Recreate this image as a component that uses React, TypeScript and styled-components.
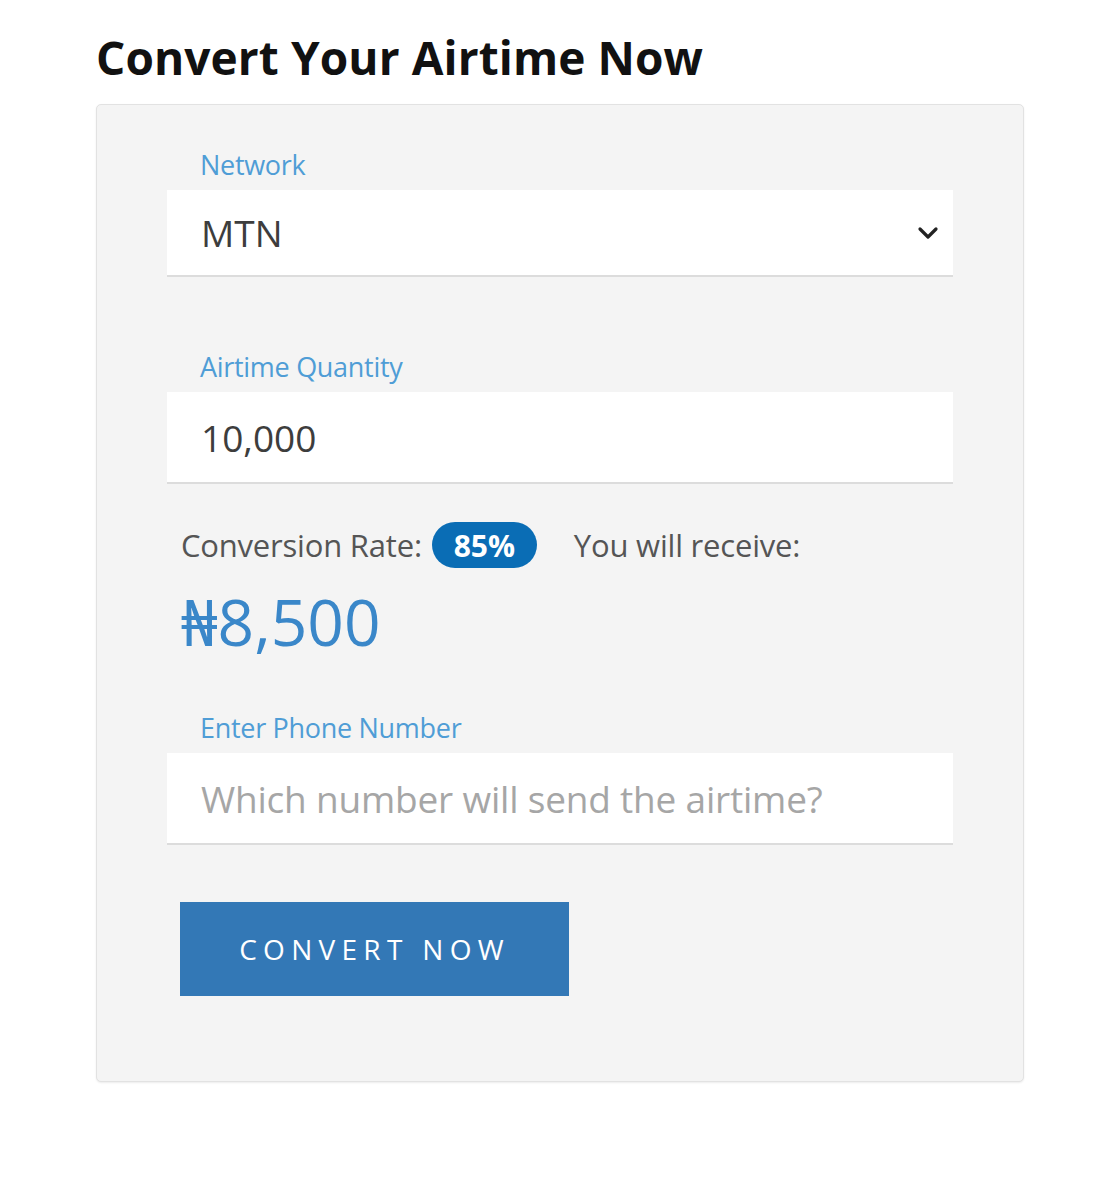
import styled, { createGlobalStyle } from "styled-components";

const GlobalStyle = createGlobalStyle`
    *, *::before, *::after {
        box-sizing: border-box;
    }

    body {
        margin: 0;
        background: #ffffff;
        font-family: "Open Sans", "Noto Sans", sans-serif;
    }
`;

const Chevron = () => (
    <svg width="22" height="14" viewBox="0 0 22 14" fill="none">
        <path d="M3 3l8 8 8-8" stroke="#222" strokeWidth="3.2" strokeLinecap="round" strokeLinejoin="round"/>
    </svg>
);

export default function App() {
    return (
        <>
            <GlobalStyle/>
            <Page>
                <Title>Convert Your Airtime Now</Title>
                <Card>
                    <Field>
                        <Label>Network</Label>
                        <SelectBox>
                            <Value>MTN</Value>
                            <Chevron/>
                        </SelectBox>
                    </Field>

                    <Field>
                        <Label>Airtime Quantity</Label>
                        <InputBox>
                            <Value>10,000</Value>
                        </InputBox>
                    </Field>

                    <Summary>
                        <RateRow>
                            <Muted>Conversion Rate:</Muted>
                            <Badge>85%</Badge>
                            <Muted>You will receive:</Muted>
                        </RateRow>
                        <Amount>₦8,500</Amount>
                    </Summary>

                    <Field>
                        <Label>Enter Phone Number</Label>
                        <InputBox>
                            <Placeholder>Which number will send the airtime?</Placeholder>
                        </InputBox>
                    </Field>

                    <Button>Convert Now</Button>
                </Card>
            </Page>
        </>
    );
}

const Page = styled.div`
    padding: 30px 96px 112px;
    width: 1120px;
`

const Title = styled.h1`
    margin: 0 0 20px;
    font-size: 46px;
    font-weight: 700;
    line-height: 54px;
    color: #111;
    letter-spacing: 0.1px;
`

const Card = styled.div`
    width: 928px;
    background: #f4f4f4;
    border: 1px solid #e2e2e2;
    border-radius: 5px;
    box-shadow: 0 1px 2px rgba(0, 0, 0, 0.08);
    padding: 43px 70px 85px;
    display: flex;
    flex-direction: column;
`

const Field = styled.div`
    display: flex;
    flex-direction: column;
`

const Label = styled.label`
    padding-left: 33px;
    margin-bottom: 8px;
    font-size: 27px;
    line-height: 34px;
    color: #4f9dd6;
    letter-spacing: -0.3px;
`

const InputBox = styled.div`
    display: flex;
    align-items: center;
    justify-content: space-between;
    height: 92px;
    padding: 0 14px 0 34px;
    background: #fff;
    border-bottom: 2px solid #dcdcdc;
`

const SelectBox = styled(InputBox)`
    height: 87px;
    margin-bottom: 73px;
`

const Value = styled.span`
    font-size: 37px;
    color: #3d3d3d;
`

const Placeholder = styled(Value)`
    color: #a6a6a6;
    letter-spacing: -0.2px;
`

const Summary = styled.div`
    padding-left: 14px;
    margin: 38px 0 54px;
`

const RateRow = styled.div`
    display: flex;
    align-items: center;
    gap: 10px;
    height: 46px;
`

const Muted = styled.span`
    font-size: 31px;
    color: #555;
    letter-spacing: -0.2px;

    &:last-child {
        margin-left: 27px;
    }
`

const Badge = styled.span`
    display: inline-flex;
    align-items: center;
    justify-content: center;
    width: 105px;
    height: 46px;
    border-radius: 23px;
    background: #0a6db5;
    color: #fff;
    font-size: 30px;
    font-weight: 700;
`

const Amount = styled.div`
    margin-top: 19px;
    font-size: 64px;
    line-height: 70px;
    color: #3a87c9;
`

const Button = styled.button`
    align-self: flex-start;
    margin-left: 13px;
    margin-top: 57px;
    width: 389px;
    height: 94px;
    border: none;
    background: #3378b6;
    color: #fff;
    font-family: "Open Sans", sans-serif;
    font-size: 28px;
    letter-spacing: 6.3px;
    text-transform: uppercase;
`
